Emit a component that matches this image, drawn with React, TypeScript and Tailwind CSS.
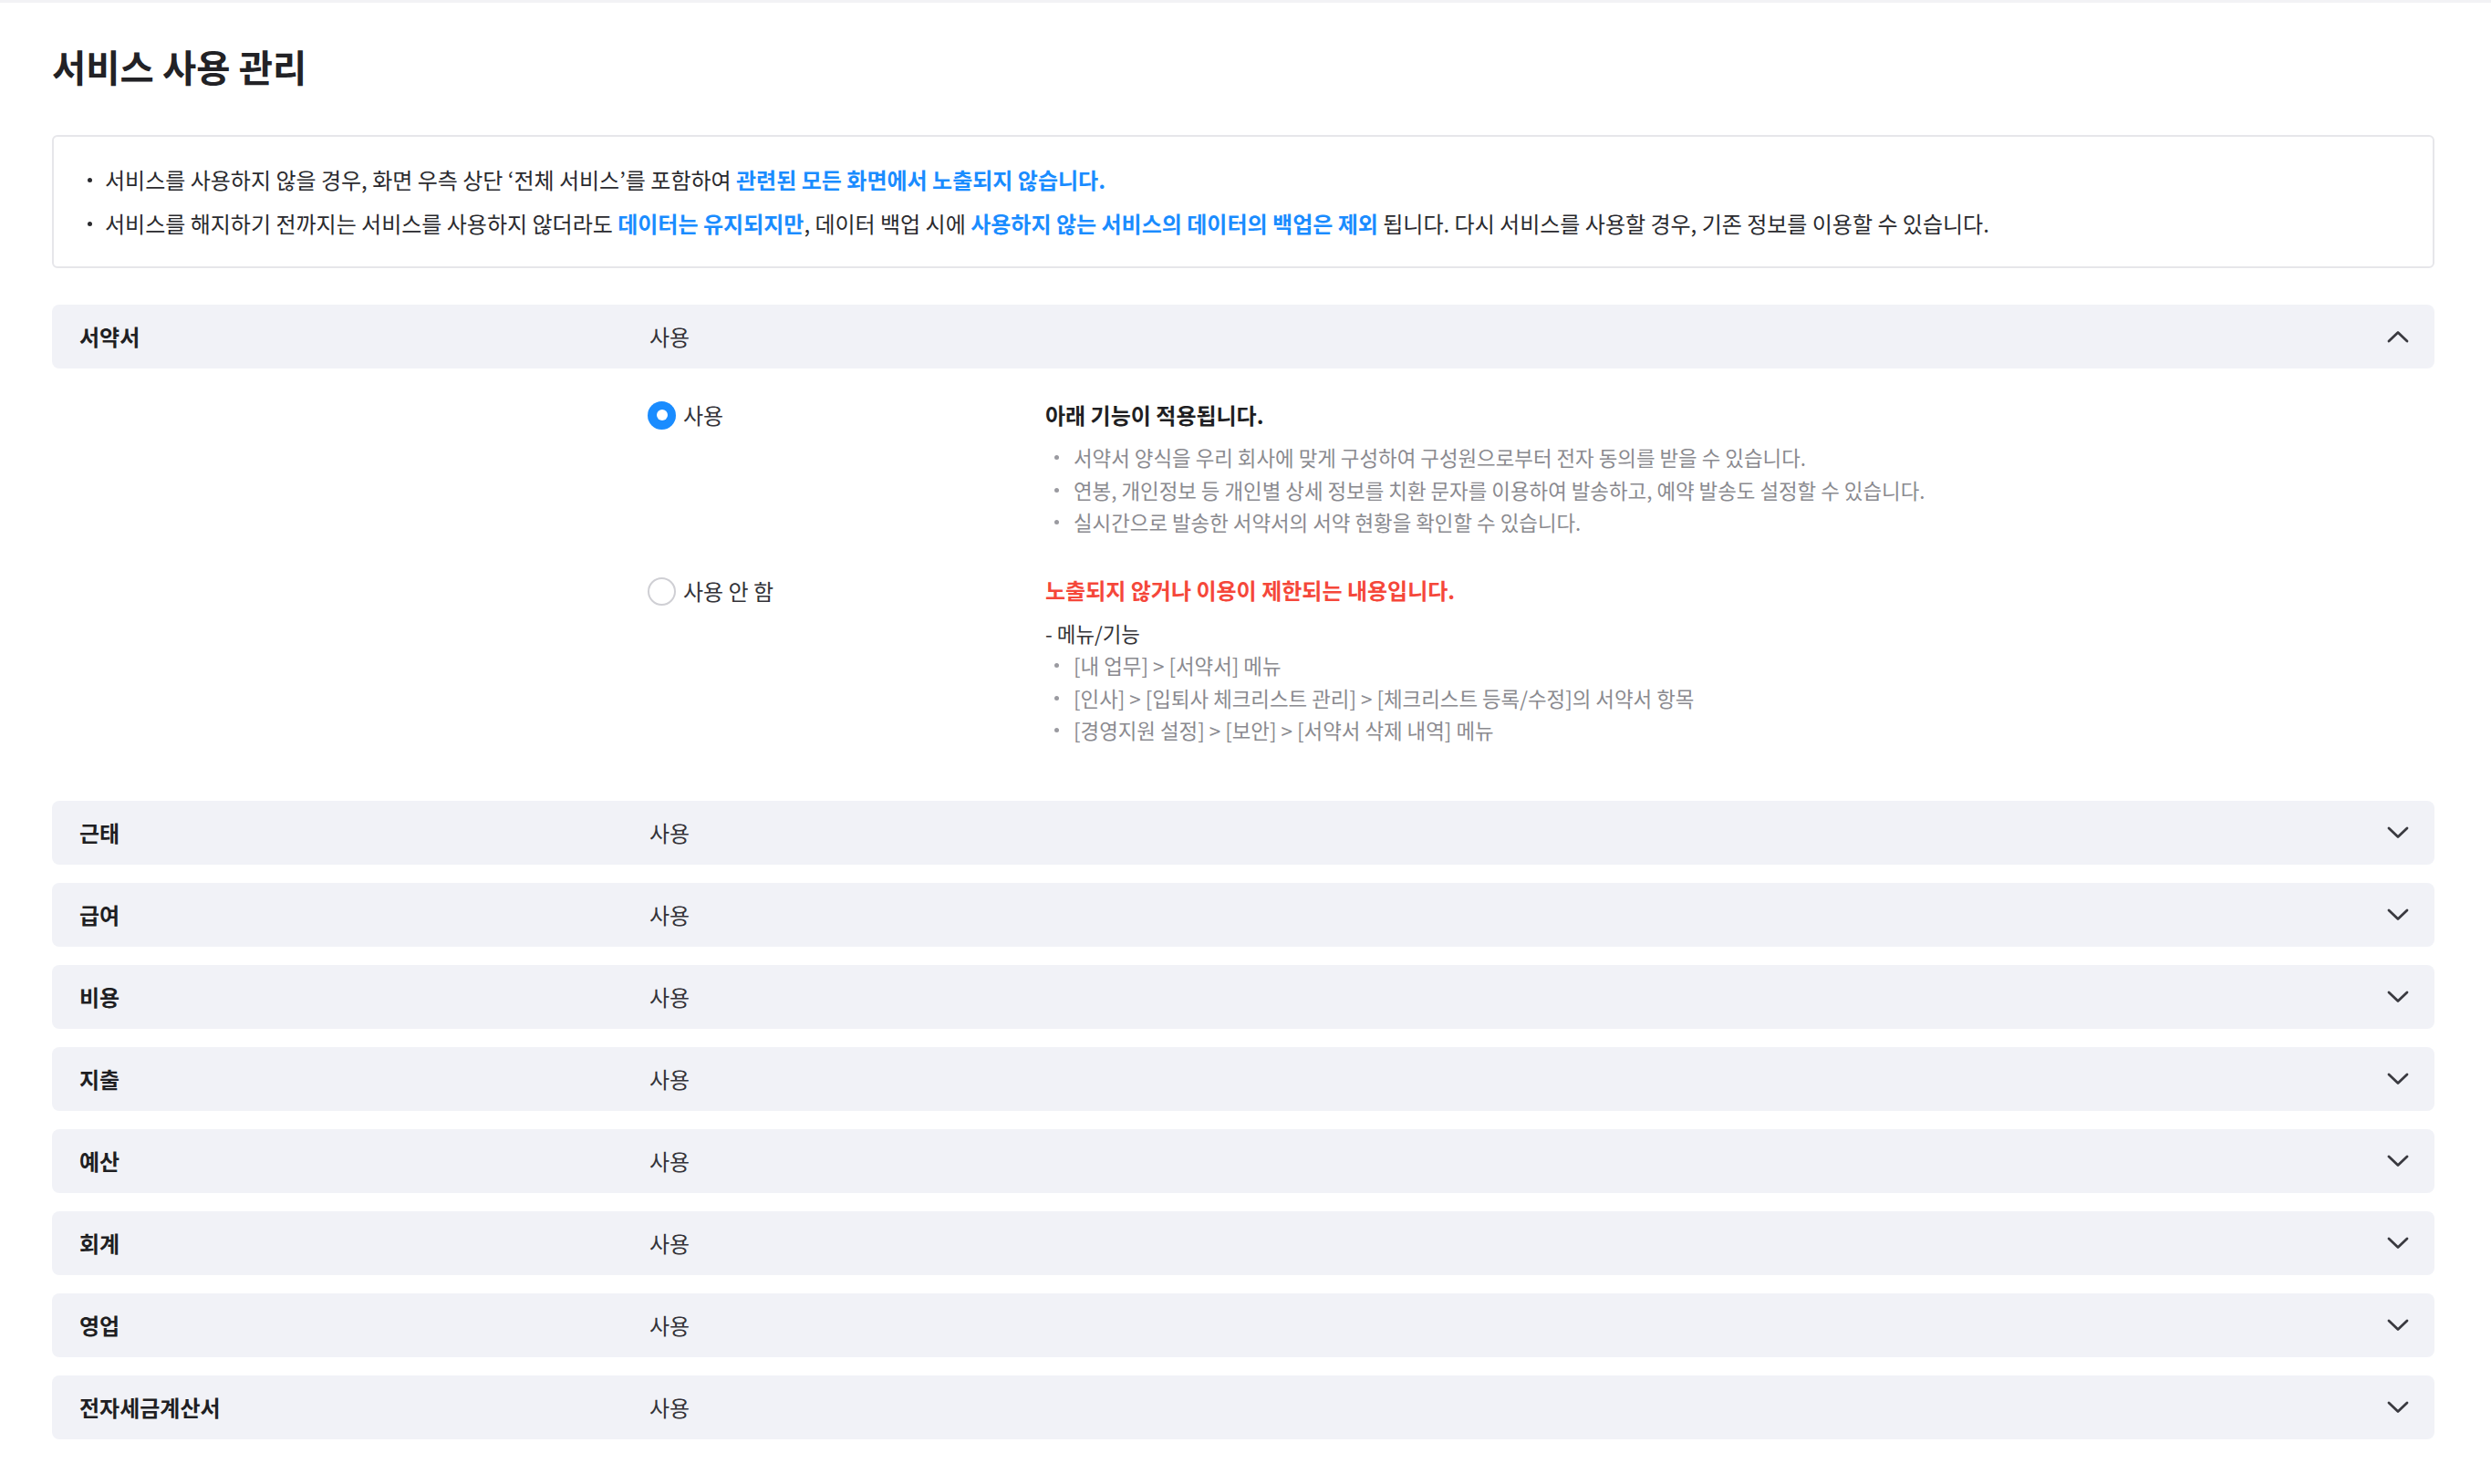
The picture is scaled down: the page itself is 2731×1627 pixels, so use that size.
import React from "react";

const FONT = { fontFamily: '"Noto Sans CJK KR", "Noto Sans", sans-serif' };

function Chevron({ up }: { up?: boolean }) {
  return (
    <svg width="24" height="14" viewBox="0 0 24 14" fill="none" className="shrink-0">
      <path
        d={up ? "M2 12 L12 2.5 L22 12" : "M2 2 L12 11.5 L22 2"}
        stroke="#3a3a40"
        strokeWidth="2.8"
        strokeLinecap="round"
        strokeLinejoin="round"
      />
    </svg>
  );
}

function Header({ name, up }: { name: string; up?: boolean }) {
  return (
    <div className="flex h-[70px] items-center rounded-[8px] bg-[#f1f2f7] pl-[30px] pr-[28px]">
      <div className="w-[625px] shrink-0 text-[24px] font-bold text-[#1f1f23]">{name}</div>
      <div className="flex-1 text-[24px] text-[#333338]">사용</div>
      <Chevron up={up} />
    </div>
  );
}

function Item({ children }: { children: React.ReactNode }) {
  return (
    <li className="flex items-start text-[22.4px] leading-[35.5px] text-[#8a8a8f]">
      <span className="mt-[15px] ml-[10px] mr-[16px] h-[5px] w-[5px] shrink-0 rounded-full bg-[#9a9aa0]" />
      <span>{children}</span>
    </li>
  );
}

export default function App() {
  const rows = ["근태", "급여", "비용", "지출", "예산", "회계", "영업", "전자세금계산서"];
  return (
    <div className="min-h-screen border-t-[3px] border-[#f2f2f5] bg-white pl-[57px] pr-[62px]" style={FONT}>
      <h1 className="pt-[44px] text-[40.5px] font-bold leading-[52px] text-[#222226]">서비스 사용 관리</h1>

      <div className="mt-[49px] rounded-[6px] border-2 border-[#e6e6ea] px-[37px] py-[23px] text-[24px] leading-[48px] text-[#2a2a2e]">
        <div className="flex items-start">
          <span className="mt-[22px] mr-[14px] h-[5px] w-[5px] shrink-0 rounded-full bg-[#2a2a2e]" />
          <span>
            서비스를 사용하지 않을 경우, 화면 우측 상단 ‘전체 서비스’를 포함하여{" "}
            <b className="font-bold text-[#1a8cff]">관련된 모든 화면에서 노출되지 않습니다.</b>
          </span>
        </div>
        <div className="flex items-start">
          <span className="mt-[22px] mr-[14px] h-[5px] w-[5px] shrink-0 rounded-full bg-[#2a2a2e]" />
          <span>
            서비스를 해지하기 전까지는 서비스를 사용하지 않더라도{" "}
            <b className="font-bold text-[#1a8cff]">데이터는 유지되지만</b>, 데이터 백업 시에{" "}
            <b className="font-bold text-[#1a8cff]">사용하지 않는 서비스의 데이터의 백업은 제외</b> 됩니다. 다시
            서비스를 사용할 경우, 기존 정보를 이용할 수 있습니다.
          </span>
        </div>
      </div>

      <div className="mt-[40px] flex flex-col gap-[20px] pb-[49px]">
        <div>
          <Header name="서약서" up />
          <div className="flex pt-[35px] pb-[39px] pl-[653px]">
            <div className="flex w-[436px] shrink-0 flex-col">
              <label className="flex h-[32px] items-center gap-[8px] text-[24px] text-[#333338]">
                <span className="flex h-[31px] w-[31px] items-center justify-center rounded-full bg-[#1a8cff]">
                  <span className="h-[12px] w-[12px] rounded-full bg-white" />
                </span>
                사용
              </label>
              <label className="mt-[161px] flex h-[32px] items-center gap-[8px] text-[24px] text-[#333338]">
                <span className="h-[31px] w-[31px] rounded-full border-2 border-[#cfcfd4] bg-white" />
                사용 안 함
              </label>
            </div>
            <div className="flex-1">
              <div className="text-[24px] font-bold leading-[32px] text-[#1f1f23]">아래 기능이 적용됩니다.</div>
              <ul className="mt-[13px]">
                <Item>서약서 양식을 우리 회사에 맞게 구성하여 구성원으로부터 전자 동의를 받을 수 있습니다.</Item>
                <Item>연봉, 개인정보 등 개인별 상세 정보를 치환 문자를 이용하여 발송하고, 예약 발송도 설정할 수 있습니다.</Item>
                <Item>실시간으로 발송한 서약서의 서약 현황을 확인할 수 있습니다.</Item>
              </ul>
              <div className="mt-[40px] text-[24px] font-bold leading-[32px] text-[#f5473a]">
                노출되지 않거나 이용이 제한되는 내용입니다.
              </div>
              <div className="mt-[14px] text-[22.4px] leading-[35.5px] text-[#333338]">- 메뉴/기능</div>
              <ul>
                <Item>[내 업무] &gt; [서약서] 메뉴</Item>
                <Item>[인사] &gt; [입퇴사 체크리스트 관리] &gt; [체크리스트 등록/수정]의 서약서 항목</Item>
                <Item>[경영지원 설정] &gt; [보안] &gt; [서약서 삭제 내역] 메뉴</Item>
              </ul>
            </div>
          </div>
        </div>
        {rows.map((r) => (
          <Header key={r} name={r} />
        ))}
      </div>
    </div>
  );
}
